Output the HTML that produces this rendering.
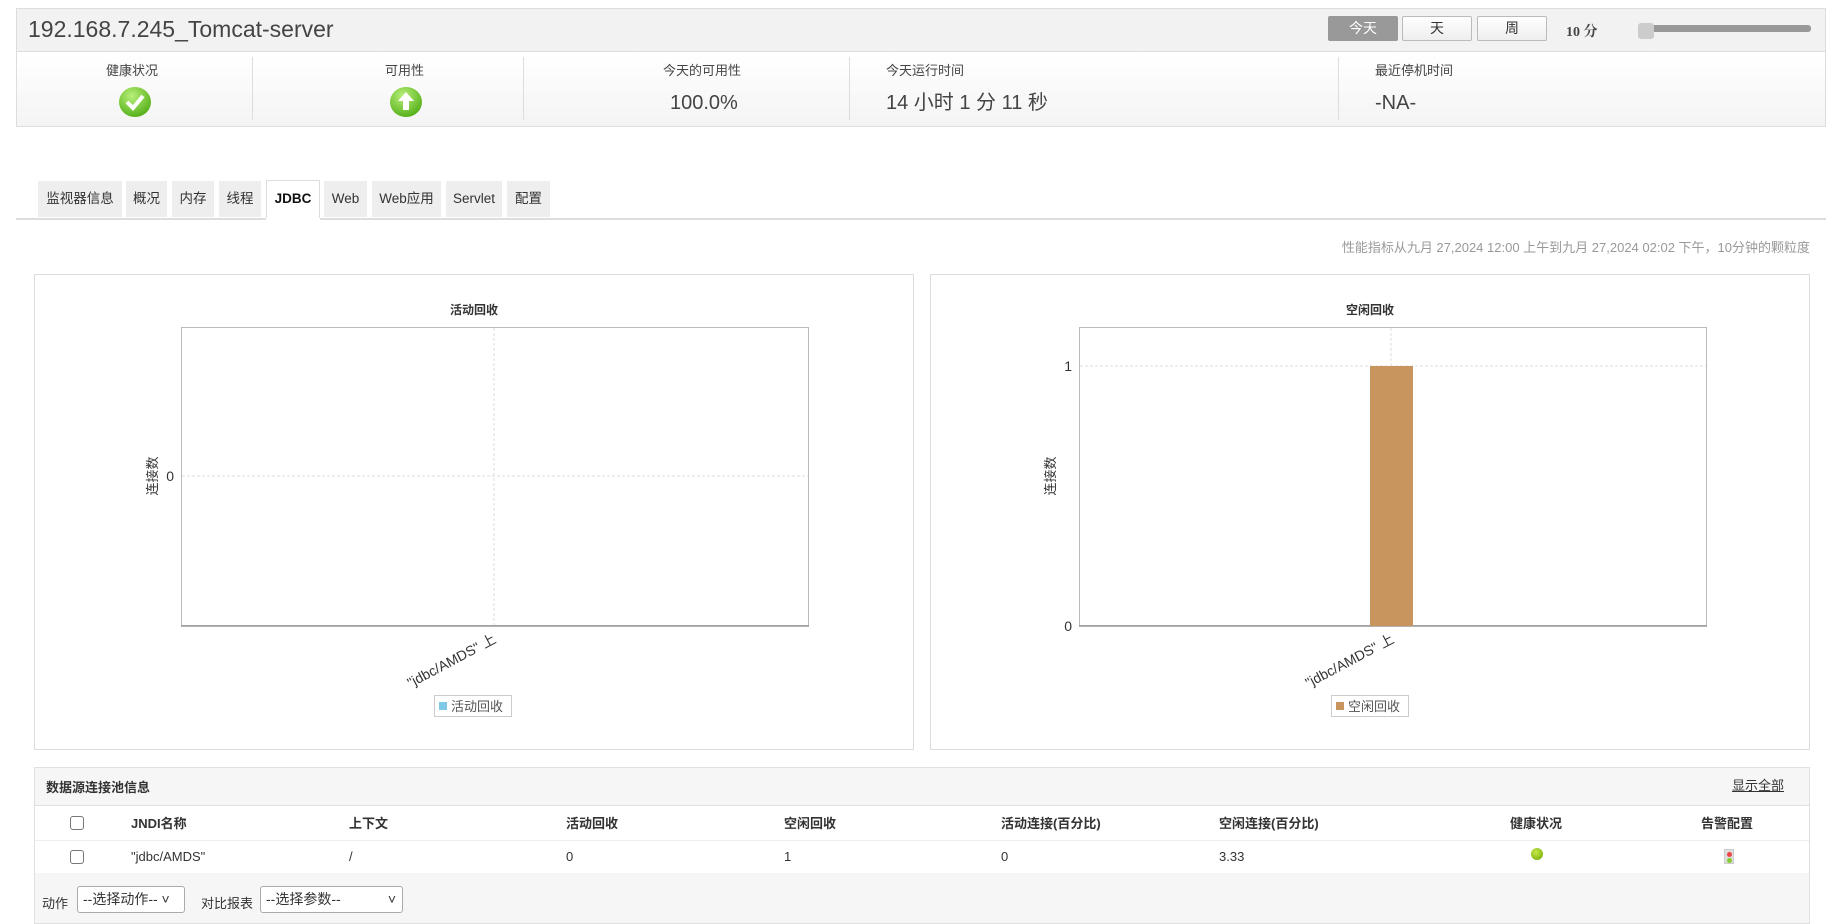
<!DOCTYPE html>
<html><head><meta charset="utf-8"><style>
*{margin:0;padding:0;box-sizing:border-box}
body{width:1834px;height:924px;background:#fff;font-family:"Liberation Sans","Noto Sans CJK SC",sans-serif;color:#333;position:relative;overflow:hidden;font-size:13px}
.a{position:absolute}
.hdr{left:16px;top:8px;width:1810px;height:44px;background:#f2f2f2;border:1px solid #ddd}
.stats{left:16px;top:52px;width:1810px;height:75px;background:linear-gradient(#fff,#f4f4f4);border:1px solid #ddd;border-top:none}
.div{top:57px;width:1px;height:63px;background:#ddd}
.lbl{top:64px;font-size:13px;color:#444;line-height:13px}
.val{top:93px;font-size:20px;color:#444;line-height:20px}
.btn{top:16px;height:25px;border:1px solid #bbb;background:linear-gradient(#fff,#eee);font-size:14px;text-align:center;line-height:23px;color:#333;border-radius:2px}
.tab{top:181px;height:36px;background:#eee;font-size:13.5px;line-height:36px;text-align:center;color:#333}
.box{border:1px solid #ddd;background:#fff}
.th{top:813px;font-size:13px;font-weight:bold;color:#333}
.td{top:849px;font-size:13px;color:#333}
.cb{width:14px;height:14px;border:1px solid #777;border-radius:3px;background:#fff}
.sel{top:886px;height:27px;border:1px solid #aaa;border-radius:3px;background:#fff;font-size:14px;line-height:25px;padding-left:5px}
</style></head><body>
<div class="a hdr"></div>
<div class="a" style="left:28px;top:16px;font-size:23px;color:#444">192.168.7.245_Tomcat-server</div>
<div class="a btn" style="left:1328px;width:70px;background:#999;color:#fff;border-color:#999">今天</div>
<div class="a btn" style="left:1402px;width:70px">天</div>
<div class="a btn" style="left:1477px;width:70px">周</div>
<div class="a" style="left:1566px;top:21px;font-size:14px;font-weight:bold;color:#444;font-family:'Liberation Serif','Noto Serif CJK SC',serif">10 分</div>
<div class="a" style="left:1640px;top:25px;width:171px;height:7px;background:#999;border-radius:3px"></div>
<div class="a" style="left:1638px;top:23px;width:16px;height:16px;background:#ccc;border-radius:3px"></div>

<div class="a stats"></div>
<div class="a div" style="left:252px"></div><div class="a div" style="left:523px"></div><div class="a div" style="left:849px"></div><div class="a div" style="left:1338px"></div>
<div class="a lbl" style="left:106px">健康状况</div>
<div class="a lbl" style="left:385px">可用性</div>
<div class="a lbl" style="left:663px">今天的可用性</div>
<div class="a lbl" style="left:886px">今天运行时间</div>
<div class="a lbl" style="left:1375px">最近停机时间</div>
<svg class="a" style="left:118px;top:86px" width="34" height="32"><defs><radialGradient id="g" cx=".4" cy=".3" r=".8"><stop offset="0" stop-color="#b8f07a"/><stop offset="1" stop-color="#4aa80e"/></radialGradient></defs><ellipse cx="17" cy="16" rx="16" ry="15" fill="url(#g)"/><path d="M9 16l6 6 10-12" stroke="#fff" stroke-width="4" fill="none"/></svg>
<svg class="a" style="left:389px;top:86px" width="34" height="32"><ellipse cx="17" cy="16" rx="16" ry="15" fill="url(#g)"/><path d="M17 6l-8 9h5v9h6v-9h5z" fill="#fff"/></svg>
<div class="a val" style="left:670px">100.0%</div>
<div class="a val" style="left:886px">14 小时 1 分 11 秒</div>
<div class="a val" style="left:1375px">-NA-</div>

<div class="a tab" style="left:38px;width:84px">监视器信息</div>
<div class="a tab" style="left:126px;width:41px">概况</div>
<div class="a tab" style="left:172px;width:42px">内存</div>
<div class="a tab" style="left:219px;width:42px">线程</div>
<div class="a tab" style="left:266px;width:54px;background:#fff;border:1px solid #ddd;border-bottom:none;height:38px;top:180px;font-weight:bold;color:#111">JDBC</div>
<div class="a tab" style="left:324px;width:43px">Web</div>
<div class="a tab" style="left:372px;width:69px">Web应用</div>
<div class="a tab" style="left:446px;width:56px">Servlet</div>
<div class="a tab" style="left:507px;width:43px">配置</div>
<div class="a" style="left:16px;top:218px;width:1810px;height:2px;background:#ddd"></div>
<div class="a" style="left:266px;top:218px;width:54px;height:2px;background:#fff"></div>
<div class="a" style="right:24px;top:237px;font-size:13px;color:#999">性能指标从九月 27,2024 12:00 上午到九月 27,2024 02:02 下午，10分钟的颗粒度</div>

<div class="a box" style="left:34px;top:274px;width:880px;height:476px"></div>
<div class="a box" style="left:930px;top:274px;width:880px;height:476px"></div>
<svg class="a" style="left:0;top:0" width="1834" height="760" font-family="Liberation Sans,Noto Sans CJK SC,sans-serif">
<g font-size="13" fill="#333">
<text x="474" y="314" text-anchor="middle" font-weight="bold" font-size="12">活动回收</text>
<rect x="181.5" y="327.5" width="627" height="298" fill="#fff" stroke="#bbb"/>
<line x1="181" y1="626" x2="809" y2="626" stroke="#999" stroke-width="1.5"/>
<line x1="182" y1="476" x2="808" y2="476" stroke="#ddd" stroke-dasharray="3,2"/>
<line x1="494" y1="328" x2="494" y2="625" stroke="#ddd" stroke-dasharray="3,2"/>
<text x="174" y="481" text-anchor="end" font-size="14">0</text>
<text transform="translate(157,476) rotate(-90)" text-anchor="middle" font-size="13">连接数</text>
<text transform="translate(497,642) rotate(-28)" text-anchor="end" font-size="14">"jdbc/AMDS" 上</text>
<rect x="434.5" y="695.5" width="77" height="21" fill="#fff" stroke="#ccc"/>
<rect x="439" y="702" width="8" height="8" fill="#7ec8e8"/>
<text x="451" y="711" font-size="13" fill="#555">活动回收</text>

<text x="1370" y="314" text-anchor="middle" font-weight="bold" font-size="12">空闲回收</text>
<rect x="1079.5" y="327.5" width="627" height="298" fill="#fff" stroke="#bbb"/>
<line x1="1079" y1="626" x2="1707" y2="626" stroke="#999" stroke-width="1.5"/>
<line x1="1080" y1="366" x2="1706" y2="366" stroke="#ddd" stroke-dasharray="3,2"/>
<line x1="1391" y1="328" x2="1391" y2="625" stroke="#ddd" stroke-dasharray="3,2"/>
<rect x="1370" y="366" width="43" height="260" fill="#c9955f"/>
<text x="1072" y="371" text-anchor="end" font-size="14">1</text>
<text x="1072" y="631" text-anchor="end" font-size="14">0</text>
<text transform="translate(1055,476) rotate(-90)" text-anchor="middle" font-size="13">连接数</text>
<text transform="translate(1395,642) rotate(-28)" text-anchor="end" font-size="14">"jdbc/AMDS" 上</text>
<rect x="1331.5" y="695.5" width="77" height="21" fill="#fff" stroke="#ccc"/>
<rect x="1336" y="702" width="8" height="8" fill="#c9955f"/>
<text x="1348" y="711" font-size="13" fill="#555">空闲回收</text>
</g></svg>

<div class="a" style="left:34px;top:767px;width:1776px;height:157px;background:#f6f6f6;border:1px solid #e0e0e0"></div>
<div class="a" style="left:35px;top:805px;width:1774px;height:68px;background:#fff;border-top:1px solid #e0e0e0"></div>
<div class="a" style="left:35px;top:840px;width:1774px;height:1px;background:#eee"></div>
<div class="a" style="left:46px;top:777px;font-size:13px;font-weight:bold">数据源连接池信息</div>
<div class="a" style="left:1732px;top:775px;font-size:13px;text-decoration:underline">显示全部</div>
<div class="a cb" style="left:70px;top:816px"></div>
<div class="a cb" style="left:70px;top:850px"></div>
<div class="a th" style="left:131px">JNDI名称</div>
<div class="a th" style="left:349px">上下文</div>
<div class="a th" style="left:566px">活动回收</div>
<div class="a th" style="left:784px">空闲回收</div>
<div class="a th" style="left:1001px">活动连接(百分比)</div>
<div class="a th" style="left:1219px">空闲连接(百分比)</div>
<div class="a th" style="left:1510px">健康状况</div>
<div class="a th" style="left:1701px">告警配置</div>
<div class="a td" style="left:131px">"jdbc/AMDS"</div>
<div class="a td" style="left:349px">/</div>
<div class="a td" style="left:566px">0</div>
<div class="a td" style="left:784px">1</div>
<div class="a td" style="left:1001px">0</div>
<div class="a td" style="left:1219px">3.33</div>
<div class="a" style="left:1531px;top:848px;width:12px;height:12px;border-radius:50%;background:radial-gradient(circle at 40% 35%,#c6e84a,#6aa800)"></div>
<div class="a" style="left:1724px;top:849px;width:10px;height:15px;background:#ddd;border:1px solid #ccc"><div style="margin:2px auto 0;width:5px;height:5px;border-radius:50%;background:#e44"></div><div style="margin:1px auto 0;width:5px;height:5px;border-radius:50%;background:#8c3"></div></div>
<div class="a" style="left:42px;top:893px;font-size:13px">动作</div>
<div class="a sel" style="left:77px;width:108px">--选择动作-- ˅</div>
<div class="a" style="left:201px;top:893px;font-size:13px">对比报表</div>
<div class="a sel" style="left:260px;width:143px">--选择参数--<span style="position:absolute;right:6px">˅</span></div>
</body></html>
